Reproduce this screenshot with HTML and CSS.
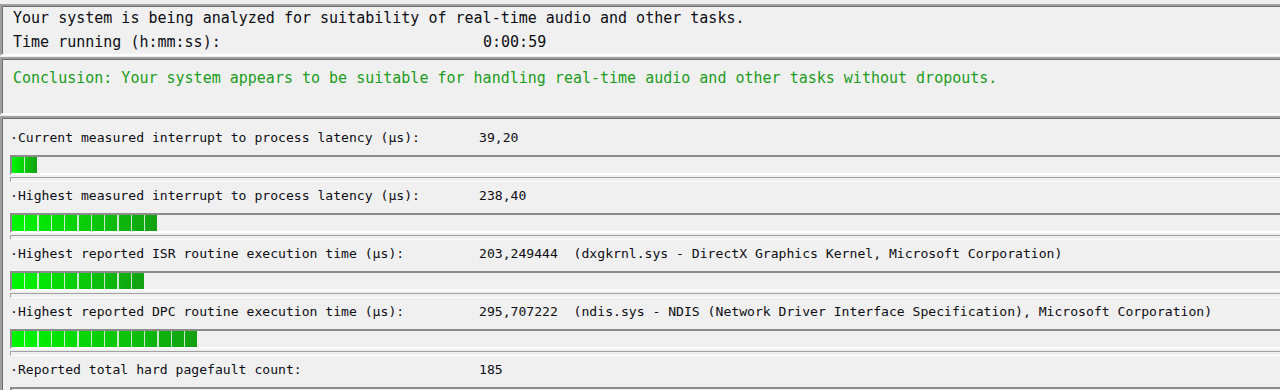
FILE: index.html
```html
<!DOCTYPE html>
<html lang="en">
<head>
  <meta charset="UTF-8">
  <title>LatencyMon - Main</title>
  <link rel="stylesheet" href="styles.css">
</head>
<body>
  <div class="window">
    <!-- Status -->
    <div class="panel status">
      <div class="line">Your system is being analyzed for suitability of real-time audio and other tasks.</div>
      <div class="line"><span class="line-key">Time running (h:mm:ss):</span><span>0:00:59</span></div>
    </div>

    <!-- Conclusion -->
    <div class="panel conclusion">
      <div class="line is-ok">Conclusion: Your system appears to be suitable for handling real-time audio and other tasks without dropouts.</div>
    </div>

    <!-- Measurements -->
    <div class="panel stats">
      <div class="stat">
        <div class="stat-line">
          <span class="stat-label">·Current measured interrupt to process latency (µs):</span>
          <span class="stat-value">39,20</span>
        </div>
        <div class="meter"><div class="meter-fill" style="width: 25.3px;"></div></div>
        <div class="meter-track"></div>
      </div>

      <div class="stat">
        <div class="stat-line">
          <span class="stat-label">·Highest measured interrupt to process latency (µs):</span>
          <span class="stat-value">238,40</span>
        </div>
        <div class="meter"><div class="meter-fill" style="width: 145.3px;"></div></div>
        <div class="meter-track"></div>
      </div>

      <div class="stat">
        <div class="stat-line">
          <span class="stat-label">·Highest reported ISR routine execution time (µs):</span>
          <span class="stat-value">203,249444  (dxgkrnl.sys - DirectX Graphics Kernel, Microsoft Corporation)</span>
        </div>
        <div class="meter"><div class="meter-fill" style="width: 132px;"></div></div>
        <div class="meter-track"></div>
      </div>

      <div class="stat">
        <div class="stat-line">
          <span class="stat-label">·Highest reported DPC routine execution time (µs):</span>
          <span class="stat-value">295,707222  (ndis.sys - NDIS (Network Driver Interface Specification), Microsoft Corporation)</span>
        </div>
        <div class="meter"><div class="meter-fill" style="width: 185.3px;"></div></div>
        <div class="meter-track"></div>
      </div>

      <div class="stat">
        <div class="stat-line">
          <span class="stat-label">·Reported total hard pagefault count:</span>
          <span class="stat-value">185</span>
        </div>
        <div class="meter"><div class="meter-fill" style="width: 0;"></div></div>
        <div class="meter-track"></div>
      </div>
    </div>
  </div>
</body>
</html>
```

FILE: styles.css
```css
/* Base */
*,
*::before,
*::after {
  box-sizing: border-box;
}

:root {
  --face-color: #f0f0f0;
  --shadow-color: #a0a0a0;
  --dark-shadow: #6e6e6e;
  --light-color: #ffffff;
  --text-color: #0d0d14;
  --ok-color: #1c9c1c;
}

html,
body {
  margin: 0;
  width: 1280px;
  height: 390px;
  overflow: hidden;
}

body {
  background: var(--face-color);
  color: var(--text-color);
  font-family: "DejaVu Sans Mono", "Liberation Mono", monospace;
}

.window {
  width: 1320px;
  height: 390px;
  padding-top: 4px;
  overflow: hidden;
}

/* Sunken panels */
.panel {
  border: 2px solid;
  border-color: var(--shadow-color) var(--light-color) var(--light-color) var(--shadow-color);
  box-shadow: inset 1px 1px 0 var(--dark-shadow);
  margin-bottom: 1px;
}

.status {
  height: 52px;
}

.conclusion {
  height: 58px;
  padding-top: 7px;
}

.stats {
  padding-top: 11px;
  height: 290px;
  overflow: hidden;
}

.line {
  height: 24px;
  line-height: 24px;
  padding-left: 11px;
  font-size: 15px;
  white-space: pre;
}

.line-key {
  display: inline-block;
  width: 470px;
}

.is-ok {
  color: var(--ok-color);
}

/* Measurement rows */
.stat {
  margin-bottom: 5px;
}

.stat-line {
  display: flex;
  height: 18px;
  line-height: 18px;
  padding-left: 8px;
  font-size: 13.1px;
  white-space: pre;
}

.stat-label {
  flex: none;
  width: 469px;
}

.meter {
  height: 20px;
  margin: 8px 0 0 8px;
  border: 2px solid;
  border-color: #8c8c8c var(--light-color) var(--light-color) #8c8c8c;
  background: var(--face-color);
}

.meter-fill {
  height: 100%;
  background:
    repeating-linear-gradient(to right, transparent 0 12px, rgba(236, 240, 236, 0.85) 12px 13.333px),
    linear-gradient(to right, #00f800, #12a012);
}

.meter-track {
  height: 5px;
  margin: 2px 0 0 8px;
  border: 1px solid;
  border-color: var(--shadow-color) var(--light-color) var(--light-color) var(--shadow-color);
}
```
